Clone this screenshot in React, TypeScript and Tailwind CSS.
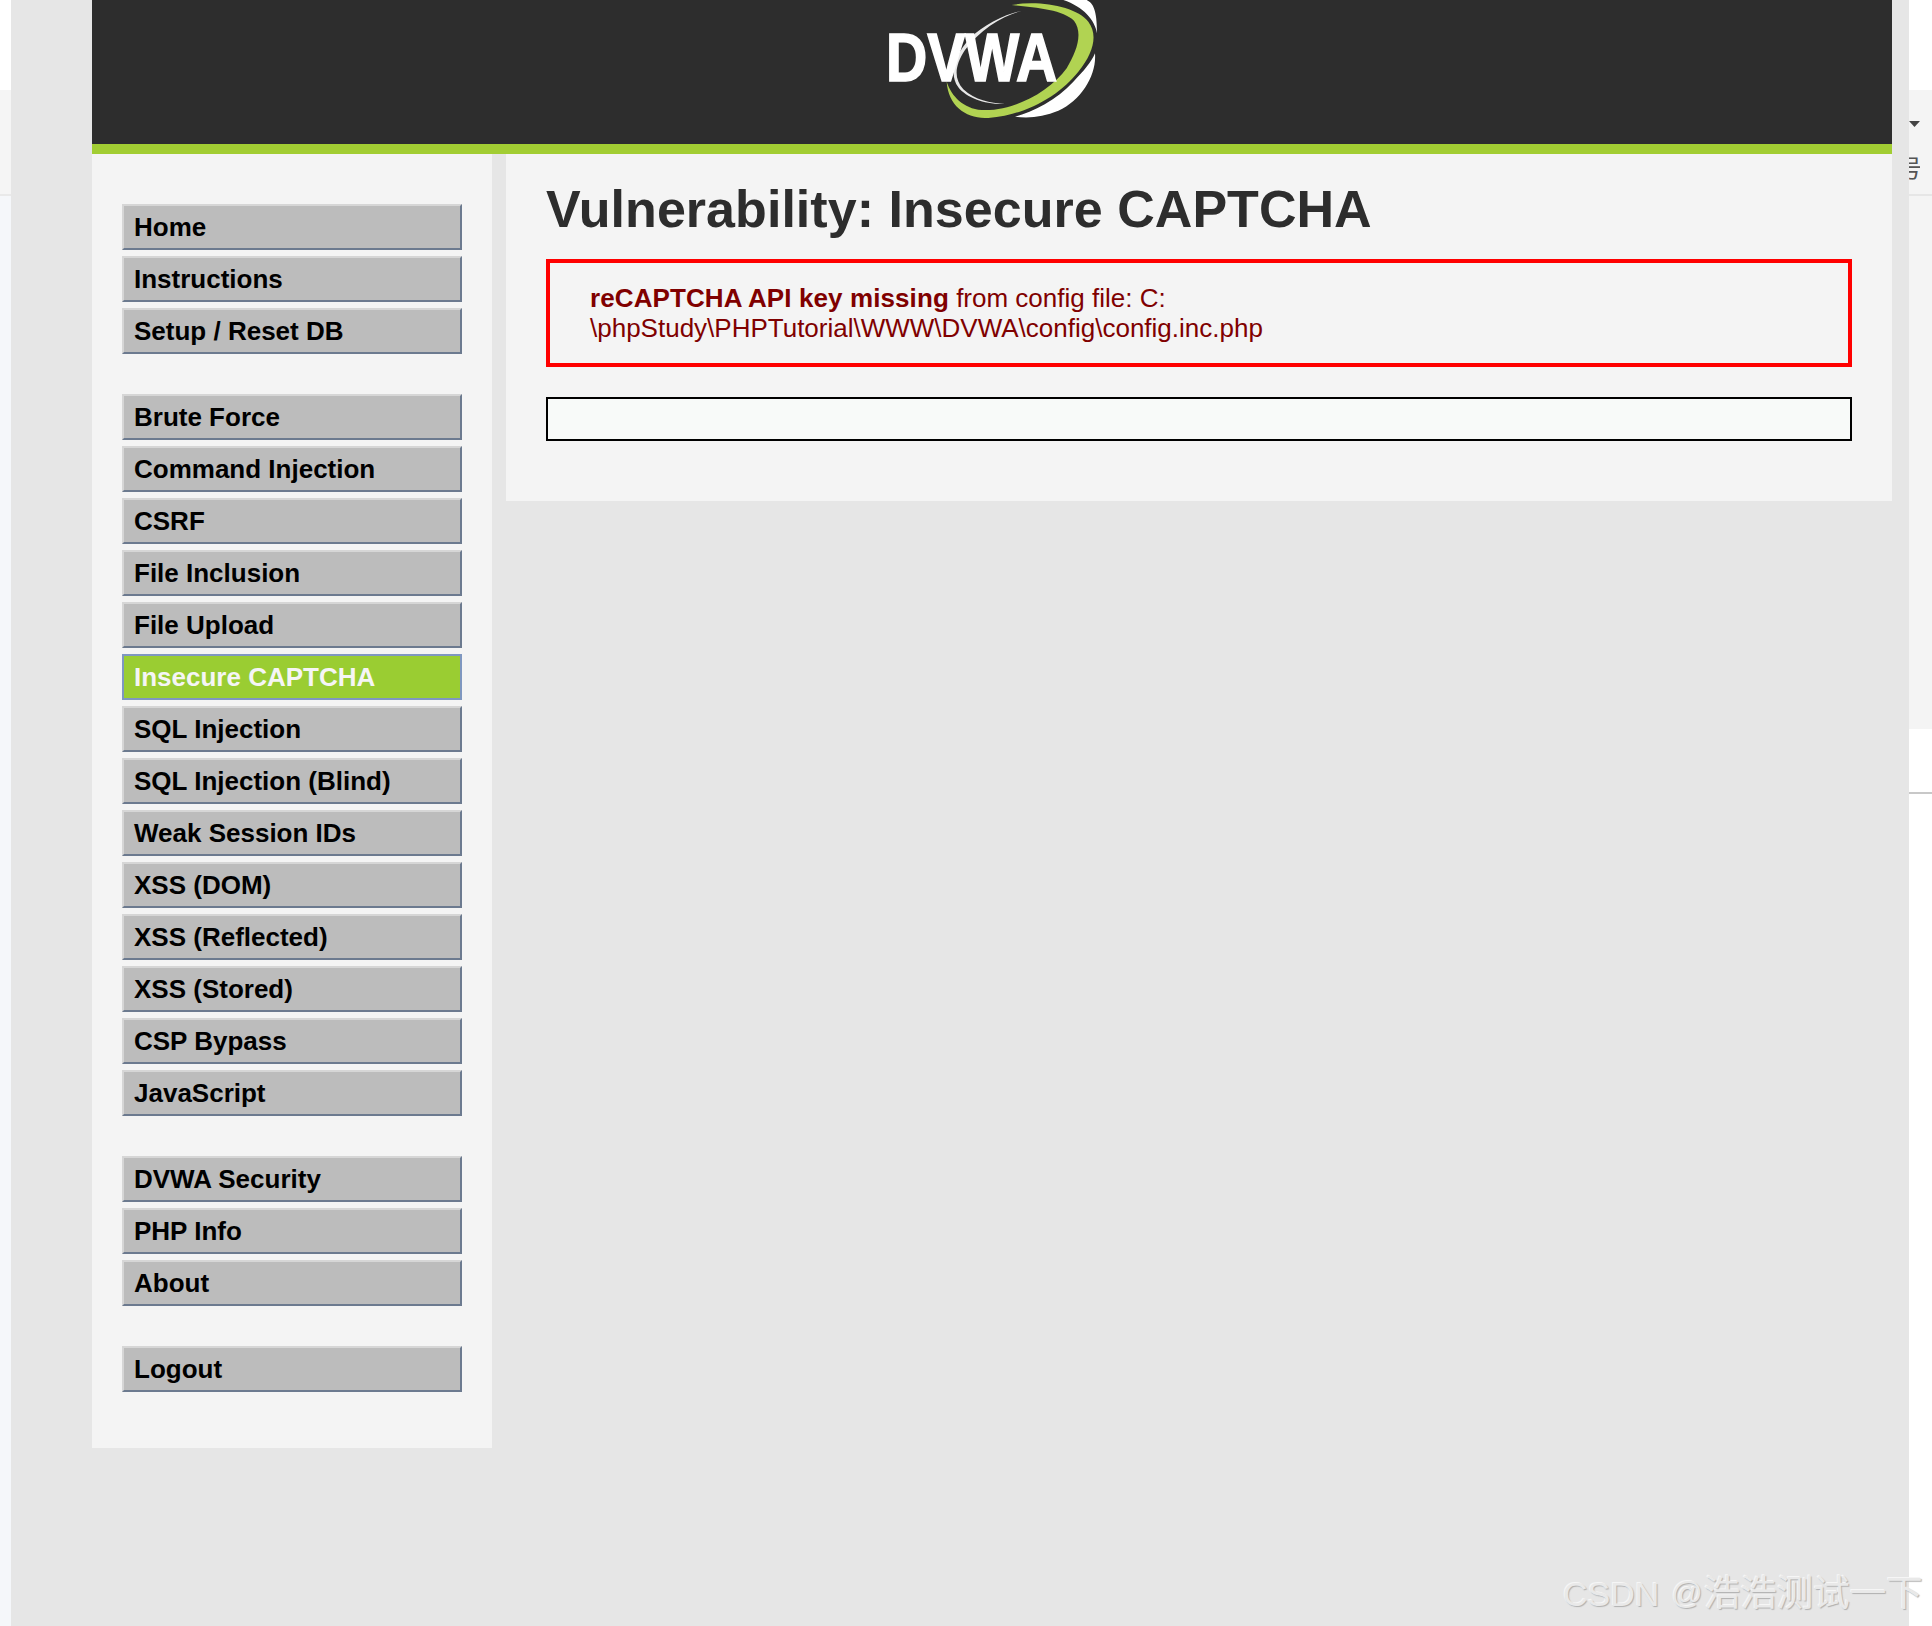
const MENU_GROUPS = [
  ["Home", "Instructions", "Setup / Reset DB"],
  [
    "Brute Force",
    "Command Injection",
    "CSRF",
    "File Inclusion",
    "File Upload",
    "Insecure CAPTCHA",
    "SQL Injection",
    "SQL Injection (Blind)",
    "Weak Session IDs",
    "XSS (DOM)",
    "XSS (Reflected)",
    "XSS (Stored)",
    "CSP Bypass",
    "JavaScript",
  ],
  ["DVWA Security", "PHP Info", "About"],
  ["Logout"],
];

// Logo drawn over a 3x grid so the swooshes line up with the zoomed reference.
function DvwaLogo() {
  return (
    <svg width="210" height="118" viewBox="261 0 630 354" className="blur-[0.5px]">
      {/* green swoosh */}
      <path
        d="M635 15 C720 0 830 20 865 65 C895 105 880 160 835 215 C780 285 680 345 565 354 C500 356 445 320 440 245 C455 290 490 325 545 330 C640 335 750 275 800 205 C830 155 850 100 822 62 C790 30 710 22 635 15 Z"
        fill="#b1d352"
      />
      {/* white swoosh, upper right */}
      <path d="M790 0 L860 0 C880 10 891 30 891 100 C885 60 850 20 790 0 Z" fill="#ffffff" />
      {/* white swoosh, lower right */}
      <path
        d="M885 160 C890 225 845 300 775 332 C730 350 690 356 645 350 C700 335 770 300 820 245 C850 215 875 185 885 160 Z"
        fill="#ffffff"
      />
      {/* thin inner line */}
      <path
        d="M665 32 C600 50 540 90 495 150 C465 195 460 235 490 268 C525 300 570 310 615 312 C560 315 500 295 475 262 C445 220 465 165 510 115 C550 75 610 45 665 32 Z"
        fill="#e8e8e8"
      />
      <text
        x="258"
        y="243"
        fontFamily="'Liberation Sans', sans-serif"
        fontWeight="700"
        fontSize="205"
        fill="#ffffff"
        stroke="#ffffff"
        strokeWidth="5"
        textLength="514"
        lengthAdjust="spacingAndGlyphs"
      >
        DVWA
      </text>
    </svg>
  );
}

function MenuItem({ label }: { label: string }) {
  const isActive = label === "Insecure CAPTCHA";
  return (
    <li
      className={`flex h-[46px] items-center border-2 pl-[10px] text-[26px] font-bold ${
        isActive
          ? "border-[#7f97c0] bg-[#9acd32] text-[#f5f5f5]"
          : "border-t-[#d6d6d6] border-l-[#d6d6d6] border-r-[#6c7a8f] border-b-[#6c7a8f] bg-[#bcbcbc] text-black"
      }`}
    >
      {label}
    </li>
  );
}

export default function App() {
  return (
    <div className="relative flex min-h-[1626px] overflow-hidden bg-white font-['Liberation_Sans',sans-serif]">
      {/* left edge of the window behind */}
      <div className="flex w-[11px] shrink-0 flex-col">
        <div className="h-[90px] bg-white" />
        <div className="h-[104px] bg-[#f5f5f5]" />
        <div className="h-[2px] bg-[#e9e9e9]" />
        <div className="flex-1 bg-[#f5f7fa]" />
      </div>

      <div className="w-[1898px] shrink-0 bg-[#e6e6e6] pl-[81px] pr-[17px]">
        <header className="flex h-[144px] justify-center overflow-hidden bg-[#2d2d2d]">
          <DvwaLogo />
        </header>
        <div className="h-[10px] bg-[#a2cd33]" />

        <div className="flex items-start gap-[14px]">
          <nav className="flex h-[1294px] w-[400px] shrink-0 flex-col gap-[40px] bg-[#f4f4f4] pl-[30px] pr-[30px] pt-[50px]">
            {MENU_GROUPS.map((group, index) => (
              <ul key={index} className="flex flex-col gap-[6px]">
                {group.map((label) => (
                  <MenuItem key={label} label={label} />
                ))}
              </ul>
            ))}
          </nav>

          <main className="h-[347px] flex-1 bg-[#f4f4f4] px-[40px] pt-[25px]">
            <h1 className="text-[52px] font-bold leading-[60px] tracking-[0.04px] text-[#2d2d2d]">
              Vulnerability: Insecure CAPTCHA
            </h1>
            <div className="mt-[20px] h-[108px] border-4 border-[#ff0000] pl-[40px] pt-[20px] text-[26px] leading-[30px] text-[#800000]">
              <b className="tracking-[0.1px]">reCAPTCHA API key missing</b> from config file: C:
              <br />
              \phpStudy\PHPTutorial\WWW\DVWA\config\config.inc.php
            </div>
            <div className="mt-[30px] h-[44px] border-2 border-black bg-[#f8faf9]" />
          </main>
        </div>
      </div>

      {/* right edge of the window behind */}
      <div className="flex w-[23px] shrink-0 flex-col">
        <div className="h-[90px] bg-white" />
        <div className="flex h-[104px] flex-col items-start bg-[#f4f4f4]">
          <svg width="11" height="6" viewBox="0 0 11 6" className="mt-[31px]">
            <path d="M0 0 H11 L5.5 6 Z" fill="#444444" />
          </svg>
          <div className="mt-[25px] h-[30px] w-[11px] overflow-hidden">
            <span className="-ml-[11px] block w-[24px] font-['Noto_Sans_CJK_SC',sans-serif] text-[24px] leading-[30px] text-[#555555]">
              号
            </span>
          </div>
        </div>
        <div className="h-[2px] bg-[#e6e6e6]" />
        <div className="h-[533px] bg-[#f4f4f4]" />
        <div className="h-[63px] bg-white" />
        <div className="h-[2px] bg-[#c8c8c8]" />
        <div className="flex-1 bg-white" />
      </div>

      {/* CSDN watermark sits over the page */}
      <div className="absolute left-[1563px] top-[1571px] flex w-[369px] items-center whitespace-nowrap font-['Liberation_Sans','Noto_Sans_CJK_SC',sans-serif] text-[34px] leading-[46px] text-[#e9e9e9] [text-shadow:1px_1px_1px_#b0b0b0,-1px_-1px_0_#f6f6f6]">
        <span>CSDN</span>
        <span className="ml-[12px] text-[31px]">@</span>
        <span className="ml-[1px] text-[36.5px]">浩浩测试一下</span>
      </div>
    </div>
  );
}
